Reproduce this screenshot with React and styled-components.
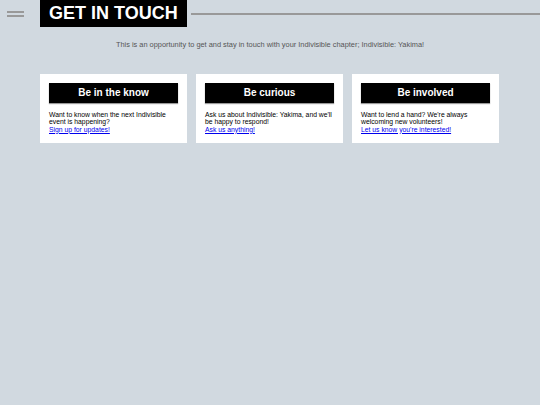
import styled, { createGlobalStyle } from 'styled-components';

const GlobalStyle = createGlobalStyle`
	html, body {
		margin: 0;
		padding: 0;
		background: #d1d9e0;
		font-family: "Liberation Sans", Arial, sans-serif;
	}
`;

const cards = [
	{
		title: 'Be in the know',
		text: 'Want to know when the next Indivisible event is happening?',
		link: 'Sign up for updates!',
	},
	{
		title: 'Be curious',
		text: "Ask us about Indivisible: Yakima, and we'll be happy to respond!",
		link: 'Ask us anything!',
	},
	{
		title: 'Be involved',
		text: "Want to lend a hand? We're always welcoming new volunteers!",
		link: "Let us know you're interested!",
	},
];

export default function App() {
	return (
		<Page>
			<GlobalStyle />
			<Header>
				<MenuButton aria-label="menu">
					<Bar />
					<Bar />
				</MenuButton>
				<Title>GET IN TOUCH</Title>
				<Rule />
			</Header>
			<Intro>
				This is an opportunity to get and stay in touch with your Indivisible chapter; Indivisible: Yakima!
			</Intro>
			<CardGrid>
				{cards.map((card) => (
					<Card key={card.title}>
						<CardTitle>{card.title}</CardTitle>
						<CardText>
							{card.text}
							<br />
							<CardLink href="#">{card.link}</CardLink>
						</CardText>
					</Card>
				))}
			</CardGrid>
		</Page>
	);
}

const Page = styled.div`
	min-height: 405px;
	background: #d1d9e0;
`;

const Header = styled.header`
	display: flex;
	align-items: center;
	height: 27px;
`;

const MenuButton = styled.div`
	display: flex;
	flex-direction: column;
	gap: 2px;
	width: 17px;
	margin: 1px 16px 0 7px;
`;

const Bar = styled.span`
	display: block;
	height: 2px;
	background: #999;
`;

const Title = styled.h1`
	margin: 0;
	height: 27px;
	box-sizing: border-box;
	padding: 0 9px;
	background: #000;
	color: #fff;
	font-size: 18px;
	font-weight: 700;
	line-height: 27px;
	white-space: nowrap;
`;

const Rule = styled.div`
	flex: 1;
	height: 2px;
	margin-left: 4px;
	margin-top: 1px;
	background: #999;
`;

const Intro = styled.p`
	margin: 13px 0 0;
	text-align: center;
	font-size: 7.4px;
	color: #555;
`;

const CardGrid = styled.div`
	display: grid;
	grid-template-columns: repeat(3, 147px);
	gap: 9px;
	padding: 0 40px;
	margin-top: 25px;
`;

const Card = styled.div`
	background: #fff;
	padding: 9px;
	min-height: 69px;
	box-sizing: border-box;
`;

const CardTitle = styled.h2`
	margin: 0;
	height: 20px;
	background: #000;
	color: #fff;
	text-align: center;
	font-size: 10px;
	font-weight: 700;
	line-height: 20px;
	box-shadow: 0 1px 1px #999;
`;

const CardText = styled.p`
	margin: 8px 0 0;
	font-size: 6.8px;
	line-height: 7.3px;
	color: #000;
`;

const CardLink = styled.a`
	color: #00e;
	text-decoration: underline;
`;
